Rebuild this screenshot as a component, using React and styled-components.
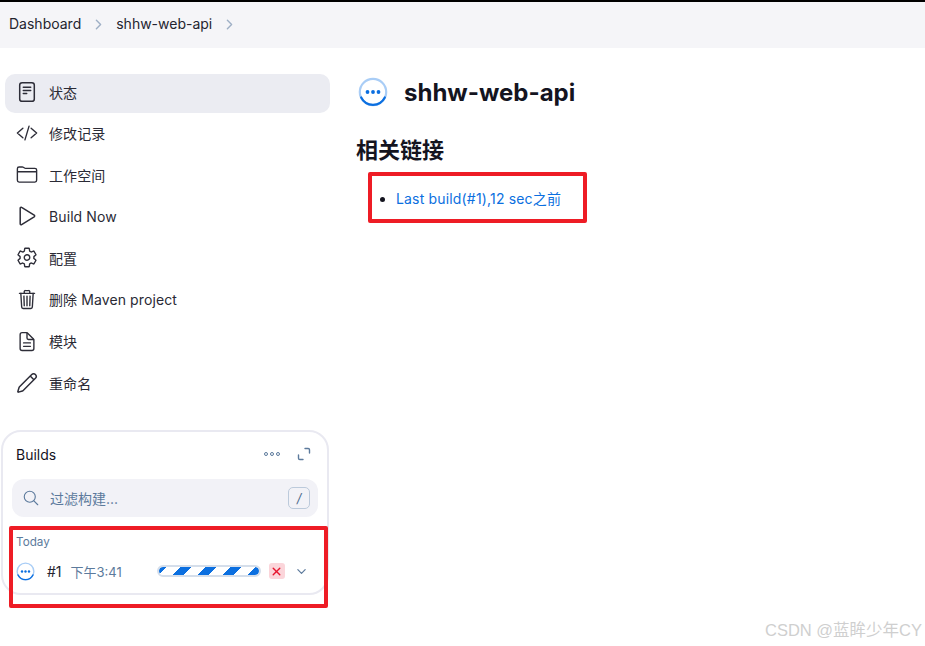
import React from 'react'
import styled, { createGlobalStyle } from 'styled-components'
import {
  IoCodeSlashOutline,
  IoFolderOutline,
  IoSettingsOutline,
  IoTrashOutline,
  IoDocumentTextOutline,
  IoSearchOutline,
  IoChevronForward,
  IoChevronDown,
  IoClose,
} from 'react-icons/io5'

const FONT = `Inter, "Noto Sans CJK SC", sans-serif`

const GlobalStyle = createGlobalStyle`
  html, body {
    margin: 0;
    padding: 0;
    background: #fff;
    font-family: ${FONT};
    color: #14141f;
  }
  * { box-sizing: border-box; }
`

const StatusIcon = () => (
  <svg width='22' height='22' viewBox='0 0 22 22' fill='none' stroke='currentColor' strokeWidth='1.5' strokeLinecap='round'>
    <rect x='3.7' y='1.7' width='14.6' height='18.6' rx='2.4' />
    <path d='M7.3 6.2h7.4M7.3 9.4h7.4M7.3 12.6h3.4' />
  </svg>
)

const PlayIcon = () => (
  <svg width='22' height='22' viewBox='0 0 22 22' fill='none' stroke='currentColor' strokeWidth='1.5' strokeLinejoin='round'>
    <path d='M4.2 3.2c0-.8.8-1.2 1.4-.8l12.6 7.8c.6.4.6 1.2 0 1.6L5.6 19.6c-.6.4-1.4 0-1.4-.8z' />
  </svg>
)

const PenIcon = () => (
  <svg width='22' height='22' viewBox='0 0 24 24' fill='none' stroke='currentColor' strokeWidth='1.6' strokeLinecap='round' strokeLinejoin='round'>
    <path d='M21.174 6.812a1 1 0 0 0-3.986-3.987L3.842 16.174a2 2 0 0 0-.5.83l-1.321 4.352a.5.5 0 0 0 .623.622l4.353-1.32a2 2 0 0 0 .83-.497z' />
    <path d='M16 5l3 3' />
  </svg>
)

const menu = [
  { label: '状态', icon: <StatusIcon />, active: true },
  { label: '修改记录', icon: <IoCodeSlashOutline size={22} /> },
  { label: '工作空间', icon: <IoFolderOutline size={23} /> },
  { label: 'Build Now', icon: <PlayIcon /> },
  { label: '配置', icon: <IoSettingsOutline size={23} /> },
  { label: '删除 Maven project', icon: <IoTrashOutline size={25} /> },
  { label: '模块', icon: <IoDocumentTextOutline size={25} /> },
  { label: '重命名', icon: <PenIcon /> },
]

const RunningIcon = ({ size }) => (
  <svg width={size} height={size} viewBox='0 0 30 30' fill='none'>
    <circle cx='15' cy='15' r='13.2' stroke='#a9cdf6' strokeWidth='2.2' />
    <path
      d='M3.2 20.5A13.2 13.2 0 0 0 26.8 20.5'
      stroke='#0b6fe0'
      strokeWidth='2.2'
      strokeLinecap='round'
    />
    <circle cx='9.5' cy='15' r='1.9' fill='#0b6fe0' />
    <circle cx='15' cy='15' r='1.9' fill='#0b6fe0' />
    <circle cx='20.5' cy='15' r='1.9' fill='#0b6fe0' />
  </svg>
)

const ExpandIcon = () => (
  <svg width='14' height='14' viewBox='0 0 14 14' fill='none'>
    <path
      d='M8 1.5h3.2a1.3 1.3 0 0 1 1.3 1.3V6M6 12.5H2.8a1.3 1.3 0 0 1-1.3-1.3V8'
      stroke='#5c7a9c'
      strokeWidth='1.4'
      strokeLinecap='round'
    />
  </svg>
)

const App = () => {
  return (
    <Page>
      <GlobalStyle />
      <Breadcrumbs>
        <Crumb>Dashboard</Crumb>
        <IoChevronForward />
        <Crumb>shhw-web-api</Crumb>
        <IoChevronForward />
      </Breadcrumbs>
      <Layout>
        <Sidebar>
          <Menu>
            {menu.map(({ label, icon, active }) => {
              return (
                <MenuItem key={label} $active={active}>
                  <IconSlot>{icon}</IconSlot>
                  <span>{label}</span>
                </MenuItem>
              )
            })}
          </Menu>
          <BuildsCard>
            <CardHeader>
              <h2>Builds</h2>
              <CardActions>
                <Dots>
                  <i />
                  <i />
                  <i />
                </Dots>
                <ExpandIcon />
              </CardActions>
            </CardHeader>
            <SearchBox>
              <IoSearchOutline />
              <span>过滤构建...</span>
              <Kbd>/</Kbd>
            </SearchBox>
            <DayLabel>Today</DayLabel>
            <BuildRow>
              <RunningIcon size={19} />
              <BuildNumber>#1</BuildNumber>
              <BuildTime>下午3:41</BuildTime>
              <Progress />
              <StopButton>
                <IoClose />
              </StopButton>
              <Expander>
                <IoChevronDown />
              </Expander>
            </BuildRow>
            <Highlight $variant='builds' />
          </BuildsCard>
        </Sidebar>
        <Main>
          <Heading>
            <RunningIcon size={30} />
            <h1>shhw-web-api</h1>
          </Heading>
          <h2>相关链接</h2>
          <Links>
            <li>
              <a href='#build'>Last build(#1),12 sec之前</a>
            </li>
            <Highlight $variant='links' />
          </Links>
        </Main>
      </Layout>
      <Watermark>CSDN @蓝眸少年CY</Watermark>
    </Page>
  )
}

const Page = styled.div`
  position: relative;
  width: 925px;
  height: 646px;
  overflow: hidden;
  border-top: 2px solid #000;
`

const Breadcrumbs = styled.nav`
  display: flex;
  align-items: center;
  height: 46px;
  padding: 0 0 3px 9px;
  background: #f5f5f8;
  font-size: 14px;
  svg {
    width: 15px;
    height: 15px;
    margin: 2px 10px 0 10px;
    color: #9fb0c6;
  }
`

const Crumb = styled.span`
  color: #24242f;
`

const Layout = styled.div`
  display: grid;
  grid-template-columns: 356px 1fr;
`

const Sidebar = styled.aside`
  padding: 26px 0 0 5px;
`

const Menu = styled.div`
  display: flex;
  flex-direction: column;
  gap: 2.6px;
  width: 325px;
`

const MenuItem = styled.div`
  display: flex;
  align-items: center;
  gap: 11px;
  height: 39px;
  padding: 0 0 4px 11px;
  border-radius: 10px;
  background: ${(p) => (p.$active ? '#ebecf2' : 'transparent')};
  font-size: 14px;
  letter-spacing: 0.1px;
  color: #2a2a35;
`

const IconSlot = styled.div`
  display: flex;
  align-items: center;
  justify-content: center;
  width: 22px;
  height: 22px;
  flex: none;
  color: #2d2d38;
`

const BuildsCard = styled.section`
  position: relative;
  width: 328px;
  height: 165px;
  margin: 26px 0 0 -4px;
  padding: 13px 9px 0 9px;
  border: 2px solid #e9e9f1;
  border-radius: 20px;
`

const CardHeader = styled.header`
  display: flex;
  align-items: center;
  justify-content: space-between;
  height: 18px;
  padding: 0 7px 0 4px;
  h2 {
    margin: 0;
    font-size: 14px;
    font-weight: 400;
    color: #14141f;
  }
`

const CardActions = styled.div`
  display: flex;
  align-items: center;
  gap: 17px;
`

const Dots = styled.div`
  display: flex;
  gap: 1.5px;
  i {
    width: 4.5px;
    height: 4.5px;
    border: 1px solid #5c7a9c;
    border-radius: 50%;
  }
`

const SearchBox = styled.div`
  display: flex;
  align-items: center;
  height: 38px;
  margin-top: 16px;
  padding: 0 8px 0 10px;
  border-radius: 12px;
  background: #f2f2f7;
  font-size: 14px;
  color: #5c7a9c;
  svg {
    width: 18px;
    height: 18px;
    margin-right: 10px;
  }
  span {
    flex: 1;
  }
`

const Kbd = styled.kbd`
  display: flex;
  align-items: center;
  justify-content: center;
  width: 22px;
  height: 22px;
  border: 1px solid #bccadb;
  border-radius: 5px;
  font-family: ${FONT};
  font-size: 13px;
  font-style: italic;
  color: #4d6a8c;
`

const DayLabel = styled.div`
  margin: 17px 0 0 4px;
  font-size: 11.7px;
  line-height: 16px;
  color: #5c7a9c;
`

const BuildRow = styled.div`
  display: flex;
  align-items: center;
  height: 24px;
  margin-top: 9px;
  padding-left: 4px;
  font-size: 13px;
`

const BuildNumber = styled.span`
  margin-left: 12px;
  font-size: 14px;
  color: #24242f;
`

const BuildTime = styled.span`
  width: 86px;
  margin-left: 9px;
  color: #5c7a9c;
`

const Progress = styled.div`
  width: 104px;
  height: 12px;
  border: 2px solid #d5deea;
  border-radius: 6px;
  background: repeating-linear-gradient(
    -45deg,
    #0b6fe0 0 8px,
    #fff 8px 17.7px
  );
  background-clip: padding-box;
`

const StopButton = styled.div`
  display: flex;
  align-items: center;
  justify-content: center;
  width: 16px;
  height: 16px;
  margin-left: 8px;
  border-radius: 3px;
  background: #fbd5da;
  svg {
    width: 15px;
    height: 15px;
    color: #e6142d;
  }
`

const Expander = styled.div`
  display: flex;
  margin-left: 10px;
  svg {
    width: 13px;
    height: 13px;
    color: #5c7a9c;
  }
`

const Main = styled.main`
  padding-top: 29px;
  h2 {
    margin: 28px 0 0;
    font-size: 22px;
    line-height: 30px;
    font-weight: 700;
    color: #14141f;
  }
`

const Heading = styled.div`
  display: flex;
  align-items: center;
  gap: 16px;
  height: 30px;
  padding-left: 2px;
  h1 {
    margin: 0;
    font-size: 24px;
    font-weight: 700;
    color: #14141f;
  }
`

const Links = styled.ul`
  position: relative;
  margin: 23px 0 0;
  padding-left: 40px;
  font-size: 14px;
  letter-spacing: 0.17px;
  line-height: 22px;
  a {
    color: #0b6fe0;
    text-decoration: none;
  }
`

const Highlight = styled.div`
  position: absolute;
  border: 4px solid #ee1c25;
  border-radius: 2px;
  pointer-events: none;
  ${(p) =>
    p.$variant === 'builds'
      ? 'left: 6px; top: 94px; width: 319px; height: 82px;'
      : 'left: 12px; top: -16px; width: 219px; height: 51px;'}
`

const Watermark = styled.div`
  position: absolute;
  right: 3px;
  bottom: 5px;
  font-size: 16.5px;
  color: #cfcfcf;
  font-family: "Liberation Sans", "Noto Sans CJK SC", sans-serif;
`

export default App
